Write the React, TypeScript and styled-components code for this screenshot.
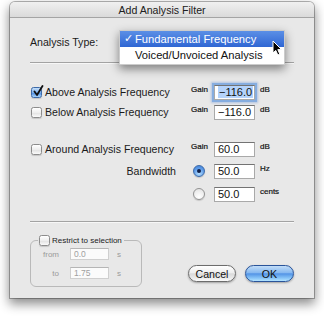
import React from 'react';
import styled, { createGlobalStyle } from 'styled-components';

const Global = createGlobalStyle`
  html, body { margin: 0; padding: 0; background: #ffffff; }
  body { font-family: "Liberation Sans", Arial, sans-serif; color: #1a1a1a; }
`;

const Page = styled.div`
  width: 324px;
  height: 318px;
  padding: 2px 10px 0;
  box-sizing: border-box;
`;

const Window = styled.div`
  position: relative;
  width: 304px;
  height: 296px;
  background: #e8e8e8;
  border-radius: 5px 5px 0 0;
  box-shadow: 0 0 0 1px rgba(0, 0, 0, 0.28), 0 5px 11px 1px rgba(0, 0, 0, 0.45);
  display: flex;
  flex-direction: column;
`;

const TitleBar = styled.div`
  flex: none;
  height: 15px;
  background: linear-gradient(#f0f0f0, #dadada);
  border-bottom: 1px solid #a4a4a4;
  border-radius: 5px 5px 0 0;
  display: flex;
  align-items: center;
  justify-content: center;
  font-size: 10.6px;
  color: #202020;
`;

const Content = styled.div`
  padding: 0 20px;
  display: flex;
  flex-direction: column;
`;

const TypeRow = styled.div`
  margin-top: 14px;
  height: 20px;
  display: flex;
  align-items: center;
  font-size: 10.6px;
`;

const TypeLabel = styled.span`
  width: 89px;
  flex: none;
`;

const MenuAnchor = styled.div`
  position: relative;
  align-self: stretch;
  flex: 1;
`;

const Menu = styled.div`
  position: absolute;
  top: -2px;
  left: 0;
  width: 164px;
  background: #ffffff;
  border: 1px solid rgba(0, 0, 0, 0.2);
  box-shadow: 0 4px 9px rgba(0, 0, 0, 0.45);
  padding: 0 0 1px;
  z-index: 2;
`;

const MenuItem = styled.div<{ $selected?: boolean }>`
  height: 16px;
  display: flex;
  align-items: center;
  font-size: 11.2px;
  padding-left: 15px;
  position: relative;
  color: ${p => (p.$selected ? '#ffffff' : '#111111')};
  background: ${p => (p.$selected ? 'linear-gradient(#5b8fe6, #2f66d3)' : 'transparent')};
`;

const CheckMark = styled.span`
  position: absolute;
  left: 4px;
  top: 1px;
  font-size: 11px;
  font-family: "DejaVu Sans", sans-serif;
`;

const Separator = styled.div<{ $top: number }>`
  margin-top: ${p => p.$top}px;
  height: 0;
  border-top: 1px solid #a3a3a3;
  border-bottom: 1px solid #f7f7f7;
`;

const FieldRow = styled.div<{ $top: number }>`
  margin-top: ${p => p.$top}px;
  height: 16px;
  display: grid;
  grid-template-columns: 161px 23px 41px auto;
  align-items: center;
`;

const CheckCell = styled.label`
  display: flex;
  align-items: center;
  gap: 3px;
  padding-left: 1px;
  font-size: 10.6px;
`;

const RightLabel = styled.span`
  justify-self: end;
  padding-right: 15px;
  font-size: 10.6px;
`;

const SmallText = styled.span`
  font-size: 8px;
  align-self: start;
  padding-top: 1px;
  color: #111;
  -webkit-text-stroke: 0.2px #111;
`;

const UnitText = styled(SmallText)`
  padding-left: 5px;
`;

const Box = styled.span<{ $checked?: boolean }>`
  position: relative;
  width: 11px;
  height: 11px;
  box-sizing: border-box;
  border-radius: 2.5px;
  flex: none;
  border: 1px solid ${p => (p.$checked ? '#3d6aa8' : '#8c8c8c')};
  background: ${p =>
    p.$checked
      ? 'linear-gradient(#c4def9, #7fb2ee 50%, #4e8ee3 55%, #a9d4fb)'
      : 'linear-gradient(#ffffff, #eeeeee 50%, #e2e2e2 55%, #fafafa)'};
  box-shadow: 0 1px 1px rgba(0, 0, 0, 0.15);
  & svg { position: absolute; left: 1px; top: -3px; }
`;

const Radio = styled.span<{ $on?: boolean }>`
  width: 12px;
  height: 12px;
  margin-left: 2px;
  box-sizing: border-box;
  border-radius: 50%;
  display: flex;
  align-items: center;
  justify-content: center;
  border: 1px solid ${p => (p.$on ? '#3d6aa8' : '#929292')};
  background: ${p =>
    p.$on
      ? 'radial-gradient(circle at 50% 75%, #b7e0ff, #5a98e6 60%, #3f7fd6)'
      : 'radial-gradient(circle at 50% 80%, #ffffff, #efefef 55%, #dedede)'};
  box-shadow: 0 1px 1px rgba(0, 0, 0, 0.15);
  &::after {
    content: '';
    display: ${p => (p.$on ? 'block' : 'none')};
    width: 4px;
    height: 4px;
    border-radius: 50%;
    background: #10204a;
  }
`;

const TextBox = styled.div<{ $focused?: boolean }>`
  width: 41px;
  height: 15px;
  box-sizing: border-box;
  background: #ffffff;
  border: 1px solid #a9a9a9;
  border-top-color: #737373;
  font-size: 11px;
  display: flex;
  align-items: center;
  padding-left: 3px;
  color: #111;
  box-shadow: ${p => (p.$focused ? '0 0 0 2px #86addf, 0 0 2px 3px rgba(120,160,220,0.5)' : 'none')};
`;

const Selected = styled.span`
  background: #b4d3fc;
  padding: 0 1px;
`;

const Bottom = styled.div`
  margin-top: 12px;
  display: flex;
  align-items: flex-end;
`;

const Group = styled.fieldset`
  margin: 0;
  width: 112px;
  box-sizing: border-box;
  padding: 2px 0 7px;
  border: 1px solid #b9b9b9;
  border-radius: 6px;
  display: flex;
  flex-direction: column;
  gap: 7px;
`;

const Legend = styled.legend`
  margin-left: 7px;
  padding: 0 2px 0 1px;
  display: flex;
  align-items: center;
  gap: 2px;
  font-size: 8px;
  color: #222;
`;

const RangeRow = styled.div`
  display: grid;
  grid-template-columns: 28px 39px auto;
  column-gap: 11px;
  align-items: center;
  height: 12px;
`;

const DimLabel = styled.span`
  justify-self: end;
  font-size: 8px;
  color: #9a9a9a;
`;

const DimBox = styled.div`
  width: 39px;
  height: 12px;
  box-sizing: border-box;
  background: #fbfbfb;
  border: 1px solid #cfcfcf;
  border-top-color: #b5b5b5;
  font-size: 8.5px;
  color: #a0a0a0;
  display: flex;
  align-items: center;
  padding-left: 3px;
`;

const DimUnit = styled.span`
  font-size: 8px;
  color: #9a9a9a;
  margin-left: -3px;
`;

const Buttons = styled.div`
  margin-left: auto;
  margin-bottom: 5px;
  display: flex;
  gap: 9px;
`;

const AquaButton = styled.button<{ $primary?: boolean }>`
  height: 17px;
  width: ${p => (p.$primary ? 49 : 48)}px;
  padding: 0;
  border-radius: 8.5px;
  font-family: inherit;
  font-size: 10.6px;
  color: #111;
  border: 1px solid ${p => (p.$primary ? '#2a549a' : '#6c6c6c')};
  background: ${p =>
    p.$primary
      ? 'linear-gradient(#c2ddf8, #86b8f0 45%, #5394e6 52%, #86c3f7 80%, #b4e4ff)'
      : 'linear-gradient(#ffffff, #eeeeee 45%, #dadada 52%, #eaeaea 80%, #fbfbfb)'};
  box-shadow: 0 1px 2px rgba(0, 0, 0, 0.3);
`;

const Cursor = styled.svg`
  position: absolute;
  left: 262px;
  top: 38px;
  z-index: 3;
`;

const CheckGlyph = () => (
  <svg width="11" height="12" viewBox="0 0 11 12">
    <path d="M1.5 6.5 L4 10 L9.5 1" fill="none" stroke="#111" strokeWidth="1.8" strokeLinecap="round" strokeLinejoin="round" />
  </svg>
);

export default function App() {
  return (
    <Page>
      <Global />
      <Window>
        <TitleBar>Add Analysis Filter</TitleBar>
        <Content>
          <TypeRow>
            <TypeLabel>Analysis Type:</TypeLabel>
            <MenuAnchor>
              <Menu>
                <MenuItem $selected>
                  <CheckMark>✓</CheckMark>
                  Fundamental Frequency
                </MenuItem>
                <MenuItem>Voiced/Unvoiced Analysis</MenuItem>
              </Menu>
            </MenuAnchor>
          </TypeRow>
          <Separator $top={10} />

          <FieldRow $top={20}>
            <CheckCell>
              <Box $checked><CheckGlyph /></Box>
              Above Analysis Frequency
            </CheckCell>
            <SmallText>Gain</SmallText>
            <TextBox $focused><Selected>−116.0</Selected></TextBox>
            <UnitText>dB</UnitText>
          </FieldRow>
          <FieldRow $top={4}>
            <CheckCell>
              <Box />
              Below Analysis Frequency
            </CheckCell>
            <SmallText>Gain</SmallText>
            <TextBox>−116.0</TextBox>
            <UnitText>dB</UnitText>
          </FieldRow>
          <FieldRow $top={21}>
            <CheckCell>
              <Box />
              Around Analysis Frequency
            </CheckCell>
            <SmallText>Gain</SmallText>
            <TextBox>60.0</TextBox>
            <UnitText>dB</UnitText>
          </FieldRow>
          <FieldRow $top={6}>
            <RightLabel>Bandwidth</RightLabel>
            <Radio $on />
            <TextBox>50.0</TextBox>
            <UnitText>Hz</UnitText>
          </FieldRow>
          <FieldRow $top={7}>
            <span />
            <Radio />
            <TextBox>50.0</TextBox>
            <UnitText>cents</UnitText>
          </FieldRow>
          <Separator $top={19} />

          <Bottom>
            <Group>
              <Legend>
                <Box />
                Restrict to selection
              </Legend>
              <RangeRow>
                <DimLabel>from</DimLabel>
                <DimBox>0.0</DimBox>
                <DimUnit>s</DimUnit>
              </RangeRow>
              <RangeRow>
                <DimLabel>to</DimLabel>
                <DimBox>1.75</DimBox>
                <DimUnit>s</DimUnit>
              </RangeRow>
            </Group>
            <Buttons>
              <AquaButton>Cancel</AquaButton>
              <AquaButton $primary>OK</AquaButton>
            </Buttons>
          </Bottom>
        </Content>
        <Cursor width="11" height="16" viewBox="0 0 11 16">
          <path d="M1 1 L1 13 L3.8 10.4 L5.8 15 L7.8 14.1 L5.8 9.6 L9.6 9.6 Z" fill="#000" stroke="#fff" strokeWidth="1" strokeLinejoin="round" />
        </Cursor>
      </Window>
    </Page>
  );
}
